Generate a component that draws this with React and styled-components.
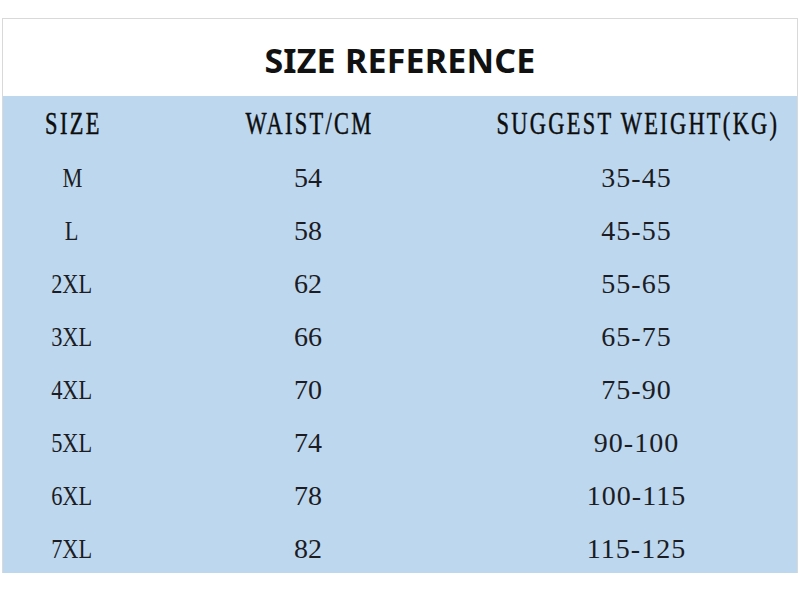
import React from "react";
import styled, { createGlobalStyle } from "styled-components";

const GlobalStyle = createGlobalStyle`
  html, body {
    margin: 0;
    padding: 0;
    background: #ffffff;
  }
`;

const Page = styled.div`
  width: 800px;
  height: 590px;
  padding-top: 18px;
  padding-left: 2px;
  box-sizing: border-box;
  background: #ffffff;
`;

const Card = styled.div`
  width: 796px;
  border: 1px solid #d9d9d9;
  border-bottom: none;
  box-sizing: border-box;
  display: flex;
  flex-direction: column;
`;

const Title = styled.h1`
  margin: 0;
  height: 77px;
  display: flex;
  align-items: center;
  justify-content: center;
  font-family: "Noto Sans", "Open Sans", sans-serif;
  font-weight: 700;
  font-size: 34px;
  letter-spacing: 0.2px;
  color: #111111;
  padding-top: 4px;
  box-sizing: border-box;
`;

const Table = styled.div`
  background: #bdd7ee;
  display: grid;
  grid-template-columns: 138px 334px minmax(0, 1fr);
  grid-auto-rows: 53px;
`;

const Cell = styled.div`
  display: flex;
  align-items: center;
  justify-content: center;
  min-width: 0;
  padding-top: ${(p) => (p.$head ? "1px" : "5px")};
  box-sizing: border-box;
  font-family: "Liberation Serif", "Times New Roman", serif;
  font-size: ${(p) => (p.$head ? "32px" : "28px")};
  color: ${(p) => (p.$head ? "#0d0d0d" : "#1c1c24")};
  -webkit-text-stroke: ${(p) => (p.$head ? "0.5px #0d0d0d" : "0")};
  white-space: nowrap;
`;

const Text = styled.span`
  display: inline-block;
  flex-shrink: 0;
  transform: scaleX(${(p) => p.$scale || 1});
  letter-spacing: ${(p) => p.$spacing || "0"};
  margin-right: ${(p) => (p.$spacing ? "-" + p.$spacing : "0")};
`;

const rows = [
  ["M", "54", "35-45"],
  ["L", "58", "45-55"],
  ["2XL", "62", "55-65"],
  ["3XL", "66", "65-75"],
  ["4XL", "70", "75-90"],
  ["5XL", "74", "90-100"],
  ["6XL", "78", "100-115"],
  ["7XL", "82", "115-125"],
];

const heads = ["SIZE", "WAIST/CM", "SUGGEST WEIGHT(KG)"];

export default function App() {
  return (
    <Page>
      <GlobalStyle />
      <Card>
        <Title>SIZE REFERENCE</Title>
        <Table>
          {heads.map((h) => (
            <Cell $head key={h}>
              <Text $scale={0.7} $spacing="3.3px">
                {h}
              </Text>
            </Cell>
          ))}
          {rows.map((r) => [
            <Cell key={r[0] + "s"}>
              <Text $scale={0.8}>{r[0]}</Text>
            </Cell>,
            <Cell key={r[0] + "w"}>
              <Text>{r[1]}</Text>
            </Cell>,
            <Cell key={r[0] + "k"}>
              <Text $spacing="1px">{r[2]}</Text>
            </Cell>,
          ])}
        </Table>
      </Card>
    </Page>
  );
}
